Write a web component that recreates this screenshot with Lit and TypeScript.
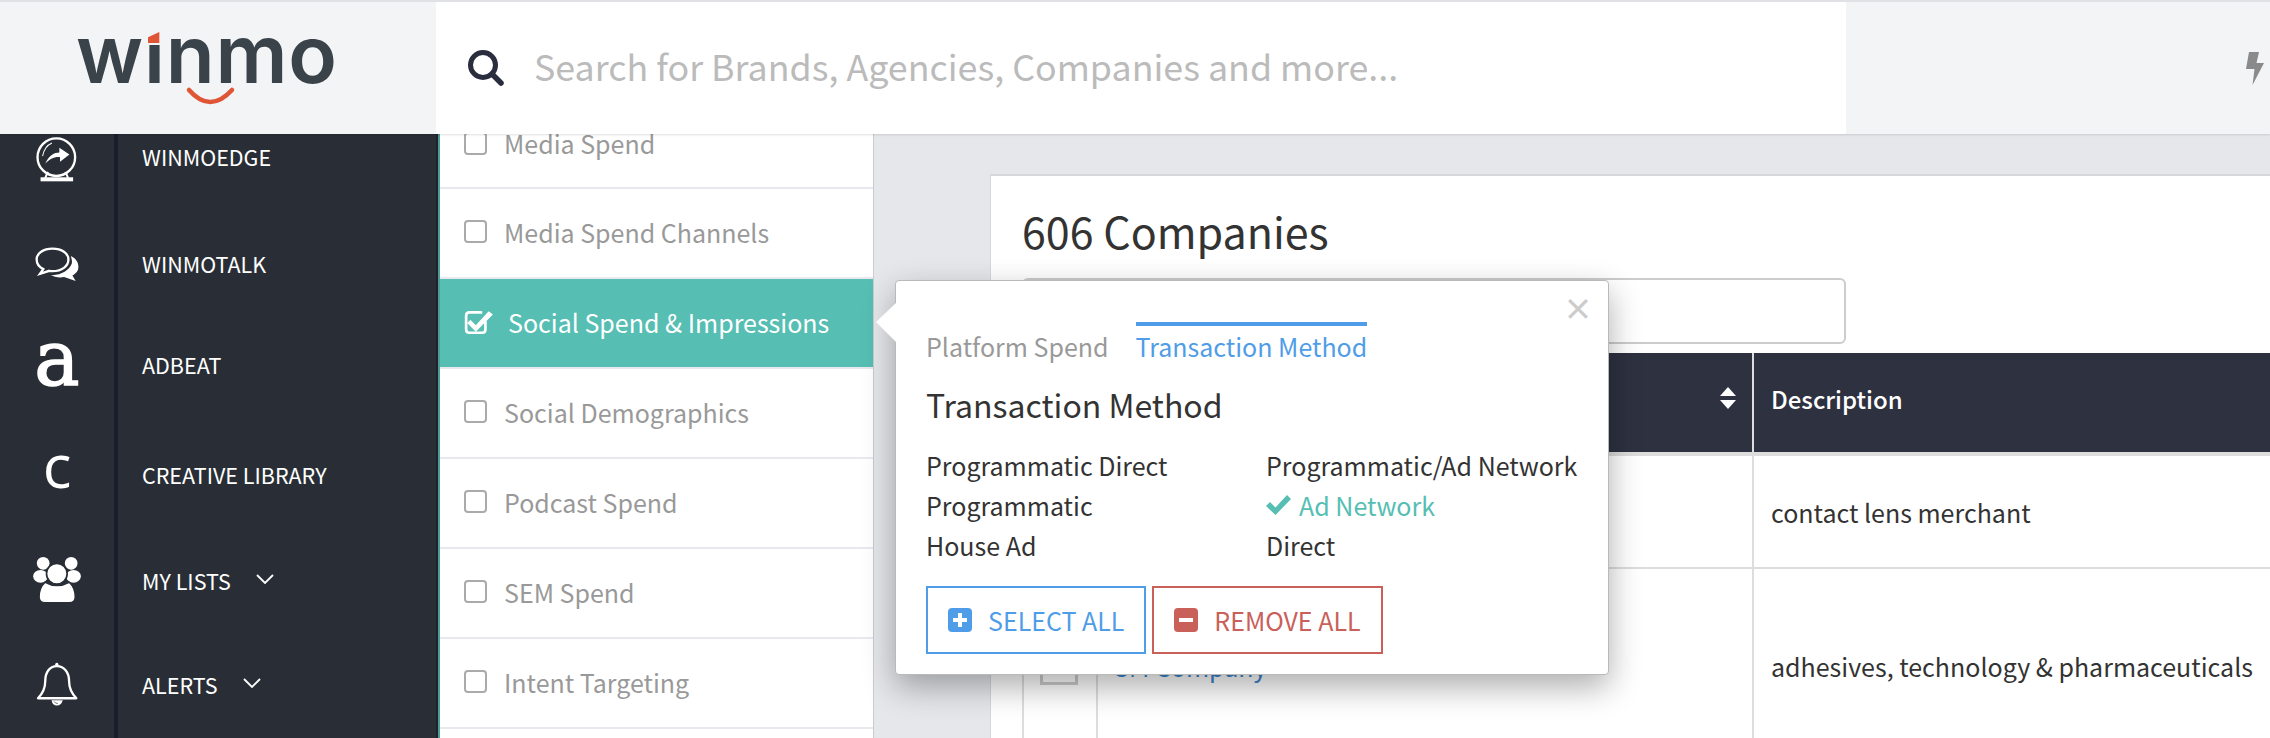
import { LitElement, css, html, svg } from "lit";
import { customElement } from "lit/decorators.js";

const ICONS: Record<string, unknown> = {
  edge: html`<svg width="44" height="47" viewBox="50 15 130 140">
    ${svg`<circle cx="113" cy="78" r="56" fill="none" stroke="#fff" stroke-width="7" />
    <path d="M72 75Q78 45 100 36" fill="none" stroke="#fff" stroke-width="3" />
    <path d="M80 98C90 72 108 64 122 64L122 50L152 70L124 92L124 78C108 76 92 84 80 98Z" fill="#fff" />
    <path d="M88 122L80 140M140 122L148 140" stroke="#fff" stroke-width="6" />
    <rect x="66" y="138" width="97" height="12" fill="#fff" />`}
  </svg>`,
  talk: html`<svg width="44" height="35" viewBox="47 350 133 104">
    ${svg`<path d="M100 354C72 354 52 368 52 387C52 400 60 410 72 416L62 430L90 421C94 422 96 422 100 422C128 422 148 407 148 387C148 368 128 354 100 354Z" fill="none" stroke="#fff" stroke-width="7" />
    <path d="M155 376C176 385 182 405 176 420C172 428 165 432 160 435L170 452L135 440C120 443 105 440 95 434C125 436 150 420 158 400C160 392 158 385 155 376Z" fill="#fff" />`}
  </svg>`,
  people: html`<svg width="48" height="45" viewBox="42 50 143 135">
    ${svg`<circle cx="72" cy="69" r="19" fill="#fff" />
    <circle cx="156" cy="69" r="19" fill="#fff" />
    <ellipse cx="64" cy="108" rx="22" ry="19" fill="#fff" />
    <ellipse cx="163" cy="108" rx="22" ry="19" fill="#fff" />
    <circle cx="113" cy="100" r="31" fill="#fff" stroke="#292e36" stroke-width="5" />
    <path d="M78 126Q113 146 150 126C160 135 168 152 168 170Q168 187 150 187L78 187Q60 187 60 170C60 152 68 135 78 126Z" fill="#fff" stroke="#292e36" stroke-width="4" />`}
  </svg>`,
  bell: html`<svg width="43" height="44" viewBox="50 363 130 132">
    ${svg`<path d="M113 375C90 375 78 395 78 420C78 445 70 458 56 472L172 472C158 458 150 445 150 420C150 395 136 375 113 375Z" fill="none" stroke="#fff" stroke-width="7" stroke-linejoin="round" />
    <circle cx="113" cy="370" r="5" fill="#fff" />
    <path d="M97 478Q100 494 113 494Q126 494 131 478Z" fill="#fff" />
    <path d="M105 482Q108 488 116 488" fill="none" stroke="#292e36" stroke-width="2" />`}
  </svg>`,
};

const NAV = [
  { icon: "edge", label: "WINMOEDGE", height: 107, iconTop: 2, labelTop: 8 },
  { icon: "talk", label: "WINMOTALK", height: 100, iconTop: 6, labelTop: 8 },
  { icon: "a", label: "ADBEAT", height: 111, iconTop: 3, labelTop: 9 },
  { icon: "c", label: "CREATIVE LIBRARY", height: 101, iconTop: 4, labelTop: 8 },
  { icon: "people", label: "MY LISTS", height: 104, iconTop: 4, labelTop: 13, caret: true },
  { icon: "bell", label: "ALERTS", height: 81, iconTop: 5, labelTop: 13, caret: true },
];

const FILTERS = ["Media Spend Channels", "Social Spend & Impressions", "Social Demographics", "Podcast Spend", "SEM Spend", "Intent Targeting"];

const chevron = html`<svg class="caret" width="18" height="10" viewBox="0 0 18 10"><path d="M1 1L9 9L17 1" fill="none" stroke="#fff" stroke-width="1.8" /></svg>`;

@customElement("app-root")
export class AppRoot extends LitElement {
  static styles = css`
    :host {
      display: block;
      width: 2270px;
      height: 738px;
      overflow: hidden;
      position: relative;
      font-family: "Noto Sans CJK SC", "Noto Sans", sans-serif;
      background: #e6e7eb;
    }
    * {
      box-sizing: border-box;
    }

    .header {
      height: 134px;
      display: flex;
      background: #f3f4f6;
      border-top: 2px solid #dfe1e5;
      box-shadow: 0 1px 2px rgba(0, 0, 0, 0.12);
      position: relative;
      z-index: 2;
    }
    .logo {
      width: 436px;
      position: relative;
    }
    .logo-word {
      position: absolute;
      left: 76px;
      top: 12px;
      font-family: Inter, sans-serif;
      font-weight: 600;
      font-size: 80px;
      line-height: 80px;
      letter-spacing: 0.800px;
      color: #3b434a;
      clip-path: inset(24px 0 0 0);
    }
    .logo-mark {
      position: absolute;
      left: 0;
      top: -2px;
    }
    .search {
      width: 1410px;
      background: #fff;
      display: flex;
      align-items: center;
      padding-left: 32px;
      gap: 30px;
    }
    .search span {
      font-size: 35.800px;
      line-height: 48px;
      color: #bbb;
      margin-top: -6px;
    }
    .tools {
      flex: 1;
      display: flex;
      justify-content: flex-end;
      align-items: center;
      padding-right: 6px;
    }

    .main {
      display: flex;
      height: 604px;
    }
    .sidebar {
      width: 440px;
      background: #292e36;
      border-right: 2px solid #4f9d96;
      box-shadow: inset -2px 0 0 #1f2329;
      color: #fff;
    }
    .nav-row {
      display: grid;
      grid-template-columns: 118px 1fr;
    }
    .nav-icon {
      border-right: 4px solid #1a1e2c;
      display: flex;
      justify-content: center;
      align-items: flex-start;
    }
    .glyph-a {
      font-family: "DejaVu Serif", serif;
      font-size: 76px;
      line-height: 30px;
      height: 46px;
      -webkit-text-stroke: 1.500px #fff;
    }
    .glyph-c {
      font-family: "Open Sans", sans-serif;
      font-weight: 400;
      font-size: 60px;
      line-height: 18px;
      height: 34px;
    }
    .nav-label {
      padding-left: 24px;
      font-size: 21.500px;
      line-height: 30px;
      display: flex;
      align-items: center;
      gap: 25px;
      height: 30px;
    }
    .caret {
      margin-top: -4px;
    }

    .filters {
      width: 434px;
      background: #fff;
      border-right: 1px solid #ccc;
      overflow: hidden;
    }
    .filter {
      height: 90px;
      border-bottom: 2px solid #e8e8ee;
      display: flex;
      align-items: center;
      padding: 0 0 3px 24px;
      gap: 17px;
      font-size: 25px;
      color: #999;
    }
    .filter.first {
      height: 55px;
      padding-bottom: 35px;
      line-height: 18px;
    }
    .filter.first .box {
      flex: none;
    }
    .filter.active {
      background: #56beb3;
      color: #fff;
      gap: 14px;
    }
    .box {
      width: 23px;
      height: 23px;
      border: 2px solid #aaa;
      border-radius: 4px;
    }

    .content {
      flex: 1;
      padding: 40px 0 0 116px;
      overflow: hidden;
    }
    .panel {
      height: 100%;
      background: #fff;
      border: solid #d6d7dc;
      border-width: 2px 0 0 1px;
      padding-left: 31px;
    }
    .panel h1 {
      margin: 0;
      padding-top: 30px;
      font-size: 43px;
      line-height: 48px;
      font-weight: 400;
      color: #333;
    }
    .filter-input {
      margin-top: 24px;
      width: 824px;
      height: 66px;
      border: 2px solid #ccc;
      border-radius: 6px;
    }
    table {
      margin-top: 9px;
      width: 1300px;
      table-layout: fixed;
      border-collapse: collapse;
      font-size: 25px;
      color: #333;
    }
    th {
      height: 101px;
      background: #2e3140;
      color: #fff;
      font-size: 24px;
      font-weight: 500;
      text-align: left;
      padding: 0 17px 8px;
      border-left: 2px solid #ddd;
      border-bottom: 4px solid #ddd;
    }
    td {
      padding: 0 17px;
      border-left: 2px solid #ddd;
      border-bottom: 2px solid #ddd;
    }
    th.sort {
      text-align: right;
      padding: 0 16px 8px 0;
    }
    td a {
      color: #3a86d0;
      font-size: 25px;
    }
    .row-box {
      width: 38px;
      height: 38px;
      margin-left: -1px;
      border: 3px solid #ccc;
    }

    .popover {
      position: absolute;
      left: 895px;
      top: 280px;
      width: 714px;
      height: 395px;
      background: #fff;
      border: 1px solid #b9b9b9;
      border-radius: 4px;
      box-shadow: 0 12px 32px rgba(0, 0, 0, 0.32);
      padding: 41px 0 0 30px;
      z-index: 3;
    }
    .arrow {
      position: absolute;
      left: -21px;
      top: 21px;
    }
    .close {
      position: absolute;
      right: 15px;
      top: 9px;
      font-size: 30px;
      line-height: 34px;
      font-weight: 700;
      color: #ccc;
    }
    .tabs {
      display: flex;
      gap: 27px;
      font-size: 25px;
      line-height: 40px;
      color: #999;
    }
    .tab {
      border-top: 4px solid transparent;
    }
    .tab.active {
      color: #4f9de8;
      border-top-color: #4f9de8;
    }
    .popover h2 {
      margin: 16px 0 0;
      font-size: 32px;
      line-height: 44px;
      font-weight: 400;
      color: #333;
    }
    .options {
      margin-top: 19px;
      display: grid;
      grid-template-columns: 340px auto;
      grid-auto-rows: 40px;
      font-size: 25px;
      line-height: 40px;
      color: #333;
    }
    .on {
      color: #56beb3;
      display: flex;
      align-items: center;
      gap: 8px;
    }
    .actions {
      margin-top: 21px;
      display: flex;
      gap: 6px;
    }
    .action {
      height: 68px;
      border: 2px solid currentColor;
      display: flex;
      align-items: center;
      gap: 16px;
      padding: 0 20px;
      font-size: 25px;
    }
    .action.add {
      color: #4f9de8;
    }
    .action.remove {
      color: #c9605a;
    }
  `;

  render() {
    return html`
      <div class="header">
        <div class="logo">
          <div class="logo-word">winmo</div>
          <svg class="logo-mark" width="436" height="134" viewBox="0 0 436 134">
            <rect x="146" y="36" width="16" height="9" fill="#f3f4f6" />
            <path d="M148 43L159.300 43L159.300 32L148 37.300Z" fill="#e05535" />
            <path d="M189 90Q210 114 232 90" fill="none" stroke="#e05535" stroke-width="4.500" stroke-linecap="round" />
          </svg>
        </div>
        <div class="search">
          <svg width="36" height="36" viewBox="0 0 36 36">
            <circle cx="15" cy="15" r="12.500" fill="none" stroke="#2a2d3e" stroke-width="5" />
            <path d="M24 24L33 33" stroke="#2a2d3e" stroke-width="5.500" stroke-linecap="round" />
          </svg>
          <span>Search for Brands, Agencies, Companies and more...</span>
        </div>
        <div class="tools">
          <svg width="18" height="33" viewBox="0 0 18 33">
            <path d="M3 0L13 0L10.500 11L18 11L6.500 33L8.500 17L0 17Z" fill="#8a8a8a" />
          </svg>
        </div>
      </div>

      <div class="main">
        <div class="sidebar">
          ${NAV.map(
            (n) => html`
              <div class="nav-row" style="height:${n.height}px">
                <div class="nav-icon" style="padding-top:${n.iconTop}px">
                  ${n.icon === "a"
                    ? html`<span class="glyph-a">a</span>`
                    : n.icon === "c"
                      ? html`<span class="glyph-c">c</span>`
                      : ICONS[n.icon]}
                </div>
                <div class="nav-label" style="margin-top:${n.labelTop}px">
                  ${n.label}${n.caret ? chevron : ""}
                </div>
              </div>
            `
          )}
        </div>

        <div class="filters">
          <div class="filter first"><span class="box"></span>Media Spend</div>
          ${FILTERS.map((f) =>
            f.startsWith("Social Spend")
              ? html`<div class="filter active">
                  <svg width="30" height="26" viewBox="0 0 28 24">
                    <path d="M20 11V19Q20 22 17 22H5Q2 22 2 19V6Q2 3 5 3H17" fill="none" stroke="#fff" stroke-width="2.500" />
                    <path d="M6 10L11 15L23 2L27 5L11 21L3 13Z" fill="#fff" />
                  </svg>
                  ${f}
                </div>`
              : html`<div class="filter"><span class="box"></span>${f}</div>`
          )}
        </div>

        <div class="content">
          <div class="panel">
            <h1>606 Companies</h1>
            <div class="filter-input"></div>
            <table>
              <colgroup>
                <col style="width:74px" />
                <col style="width:656px" />
                <col />
              </colgroup>
              <tr>
                <th></th>
                <th class="sort">
                  <svg width="16" height="22" viewBox="0 0 16 22">
                    <path d="M8 0L16 9H0ZM8 22L0 13H16Z" fill="#fff" />
                  </svg>
                </th>
                <th>Description</th>
              </tr>
              <tr style="height:114px">
                <td></td>
                <td></td>
                <td>contact lens merchant</td>
              </tr>
              <tr style="height:196px">
                <td><div class="row-box"></div></td>
                <td><a>3M Company</a></td>
                <td>adhesives, technology &amp; pharmaceuticals</td>
              </tr>
            </table>
          </div>
        </div>
      </div>

      <div class="popover">
        <svg class="arrow" width="22" height="42" viewBox="0 0 22 42">
          <path d="M22 0L1 20L22 41Z" fill="#fff" />
        </svg>
        <span class="close">×</span>
        <div class="tabs">
          <div class="tab">Platform Spend</div>
          <div class="tab active">Transaction Method</div>
        </div>
        <h2>Transaction Method</h2>
        <div class="options">
          <div>Programmatic Direct</div>
          <div>Programmatic/Ad Network</div>
          <div>Programmatic</div>
          <div class="on">
            <svg width="25" height="20" viewBox="0 0 25 20">
              <path d="M0 11L4 7L9.500 12.500L21 0L25 4L9.500 20Z" fill="#56beb3" />
            </svg>
            Ad Network
          </div>
          <div>House Ad</div>
          <div>Direct</div>
        </div>
        <div class="actions">
          <div class="action add">
            <svg width="24" height="24" viewBox="0 0 24 24">
              <rect width="24" height="24" rx="4" fill="#4f9de8" />
              <path d="M12 5V19M5 12H19" stroke="#fff" stroke-width="4" />
            </svg>
            SELECT ALL
          </div>
          <div class="action remove">
            <svg width="24" height="24" viewBox="0 0 24 24">
              <rect width="24" height="24" rx="4" fill="#c9605a" />
              <path d="M5 12H19" stroke="#fff" stroke-width="4" />
            </svg>
            REMOVE ALL
          </div>
        </div>
      </div>
    `;
  }
}
